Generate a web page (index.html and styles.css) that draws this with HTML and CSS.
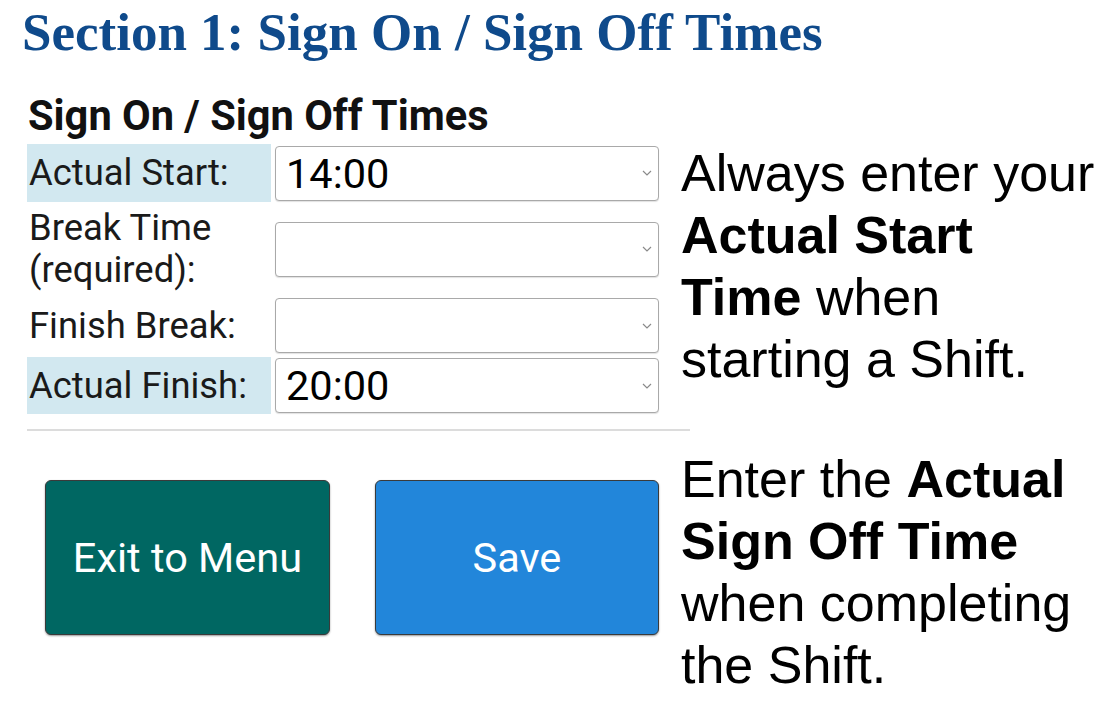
FILE: index.html
```html
<!DOCTYPE html>
<html lang="en">
<head>
<meta charset="utf-8">
<title>Section 1: Sign On / Sign Off Times</title>
<link rel="stylesheet" href="styles.css">
</head>
<body>
<h1 class="title">Section 1: Sign On / Sign Off Times</h1>
<main class="content">
  <h2 class="panel-heading">Sign On / Sign Off Times</h2>
  <div class="row-top">
    <div class="form">
      <div class="form-row r1">
        <div class="label hl">Actual Start:</div>
        <div class="select"><span class="value">14:00</span><svg class="chev" width="10" height="6" viewBox="0 0 10 6"><path d="M1 1 L5 5 L9 1" fill="none" stroke="#8a8a8a" stroke-width="1.2"/></svg></div>
      </div>
      <div class="form-row r2">
        <div class="label">Break Time<br>(required):</div>
        <div class="select"><span class="value"></span><svg class="chev" width="10" height="6" viewBox="0 0 10 6"><path d="M1 1 L5 5 L9 1" fill="none" stroke="#8a8a8a" stroke-width="1.2"/></svg></div>
      </div>
      <div class="form-row r3">
        <div class="label">Finish Break:</div>
        <div class="select"><span class="value"></span><svg class="chev" width="10" height="6" viewBox="0 0 10 6"><path d="M1 1 L5 5 L9 1" fill="none" stroke="#8a8a8a" stroke-width="1.2"/></svg></div>
      </div>
      <div class="form-row r4">
        <div class="label hl">Actual Finish:</div>
        <div class="select"><span class="value">20:00</span><svg class="chev" width="10" height="6" viewBox="0 0 10 6"><path d="M1 1 L5 5 L9 1" fill="none" stroke="#8a8a8a" stroke-width="1.2"/></svg></div>
      </div>
    </div>
    <p class="note">Always enter your <b>Actual Start Time</b> when starting a Shift.</p>
  </div>
  <hr class="sep">
  <div class="row-bottom">
    <div class="buttons">
      <button class="btn exit">Exit to Menu</button>
      <button class="btn save">Save</button>
    </div>
    <p class="note">Enter the <b>Actual Sign Off Time</b> when completing the Shift.</p>
  </div>
</main>
</body>
</html>
```
FILE: styles.css
```css
html, body {
  margin: 0;
  padding: 0;
  background: #ffffff;
}

.title {
  margin: 0;
  padding: 2px 0 0 22px;
  font-family: "Liberation Serif", "Times New Roman", serif;
  font-weight: bold;
  font-size: 53px;
  line-height: 60px;
  color: #0f4a8b;
}

.content {
  padding-left: 27px;
}

.panel-heading {
  margin: 30px 0 4px 0;
  padding-left: 1px;
  font-family: Roboto, "Noto Sans", sans-serif;
  font-weight: bold;
  font-size: 41.6px;
  line-height: 48px;
  color: #111;
}

.row-top, .row-bottom {
  display: flex;
  align-items: flex-start;
}

.form {
  width: 632px;
  display: flex;
  flex-direction: column;
  gap: 2px;
}

.form-row {
  display: flex;
  align-items: center;
  gap: 4px;
}

.r1 { height: 58px; }
.r2 { height: 90px; }
.r3 { height: 59px; }
.r4 { height: 57px; }

.label {
  width: 244px;
  height: 100%;
  box-sizing: border-box;
  padding-left: 2px;
  display: flex;
  align-items: center;
  font-family: Roboto, "Noto Sans", sans-serif;
  font-size: 36.4px;
  line-height: 42px;
  color: #1a1a1a;
}

.label.hl {
  background: #d2e8f0;
}

.select {
  flex: 1;
  height: 55px;
  box-sizing: border-box;
  border: 1px solid #a9a9a9;
  border-radius: 4px;
  box-shadow: 0 1px 1px rgba(0,0,0,0.12);
  background: #fff;
  display: flex;
  align-items: center;
  justify-content: space-between;
  padding: 0 6px 0 10px;
}

.value {
  font-family: Roboto, "Noto Sans", sans-serif;
  font-size: 41.5px;
  color: #000;
}

.chev {
  flex: none;
}

.note {
  margin: -2px 0 0 22px;
  width: 418px;
  font-family: "Liberation Sans", Arial, sans-serif;
  font-size: 52px;
  line-height: 62px;
  color: #000;
}

.note b {
  font-weight: bold;
}

.sep {
  width: 663px;
  margin: 15px 0 0 0;
  border: 0;
  height: 2px;
  background: #dcdcdc;
}

.row-bottom {
  margin-top: 19px;
}

.buttons {
  width: 632px;
  box-sizing: border-box;
  padding: 30px 0 0 18px;
  display: flex;
  gap: 45px;
}

.btn {
  width: 285px;
  height: 155px;
  border: 1px solid #3a3a3a;
  border-radius: 6px;
  box-shadow: 0 1px 2px rgba(0,0,0,0.4);
  font-family: Roboto, "Noto Sans", sans-serif;
  font-size: 41.5px;
  color: #fff;
  padding: 0;
}

.btn.exit {
  background: #006762;
}

.btn.save {
  width: 284px;
  background: #2286da;
}
```
